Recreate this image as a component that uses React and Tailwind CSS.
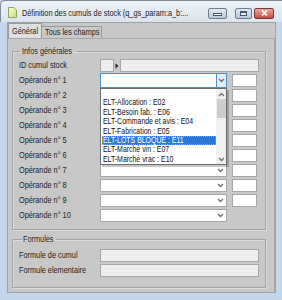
import React from "react";

const operandes = [
  "Opérande n° 1",
  "Opérande n° 2",
  "Opérande n° 3",
  "Opérande n° 4",
  "Opérande n° 5",
  "Opérande n° 6",
  "Opérande n° 7",
  "Opérande n° 8",
  "Opérande n° 9",
  "Opérande n° 10",
];

const listItems = [
  "",
  "ELT-Allocation : E02",
  "ELT-Besoin fab. : E06",
  "ELT-Commande et avis : E04",
  "ELT-Fabrication : E05",
  "ELT-LOTS BLOQUE : E11",
  "ELT-Marché vin : E07",
  "ELT-Marché vrac : E10",
];

// the dialog font is narrow, squeeze Liberation Sans to match
function T({ children, className = "" }) {
  return (
    <span className={`inline-block origin-left scale-x-[0.77] whitespace-nowrap ${className}`}>
      {children}
    </span>
  );
}

function Chevron({ up = false }) {
  return (
    <svg width="7" height="5" viewBox="0 0 7 5">
      <path
        d={up ? "M1 4l2.5-2.5L6 4" : "M1 1l2.5 2.5L6 1"}
        fill="none"
        stroke="#6f6f6f"
        strokeWidth="1.3"
      />
    </svg>
  );
}

function TitleBar() {
  return (
    <div className="h-[22px] flex items-center bg-gradient-to-b from-[#eef2f7] to-[#dbe3ec] border-t border-l border-[#7f8a96] rounded-tl-[5px]">
      <svg width="9" height="11" viewBox="0 0 9 11" className="ml-[7px] mt-[2px] shrink-0">
        <defs>
          <linearGradient id="pg" x1="0" y1="0" x2="1" y2="1">
            <stop offset="0" stopColor="#fbfde8" />
            <stop offset="1" stopColor="#c5de74" />
          </linearGradient>
        </defs>
        <path d="M0.5 0.5h5.5l2.5 2.5v7.5h-8z" fill="url(#pg)" stroke="#8fa55a" />
      </svg>
      <div className="ml-[5px] mt-[3px] flex-1 min-w-0 text-[9.5px] text-[#1b1b1b]">
        <T>Définition des cumuls de stock (q_gs_param:a_b:...</T>
      </div>
      <div className="mt-[3px] flex items-center shrink-0">
        <div className="w-[19px] h-[11px] rounded-[2px] border border-[#6e7c8e] bg-gradient-to-b from-[#e4eaf2] to-[#b9c7d8] flex items-end justify-center pb-[2px]">
          <div className="w-[7px] h-[1px] bg-white border border-[#4a5668] box-content" />
        </div>
        <div className="ml-[8px] w-[17px] h-[11px] rounded-[2px] border border-[#6e7c8e] bg-gradient-to-b from-[#e4eaf2] to-[#b9c7d8] flex items-center justify-center">
          <div className="w-[7px] h-[5px] border border-[#4a5668] border-t-2 bg-white/60" />
        </div>
        <div className="ml-[2px] mr-[8px] w-[20px] h-[11px] rounded-[2px] border border-[#7a3a35] bg-gradient-to-b from-[#e9a99f] to-[#c54b3f] flex items-center justify-center">
          <svg width="7" height="6" viewBox="0 0 7 6">
            <path d="M1 0.5l5 5M6 0.5l-5 5" stroke="#ffffff" strokeWidth="1.6" />
          </svg>
        </div>
      </div>
    </div>
  );
}

function DropList() {
  return (
    <div className="absolute left-[-1px] top-[14px] w-[127px] h-[77px] bg-white border border-[#6d6d6d] shadow-[2px_2px_0_rgba(0,0,0,0.22)] flex z-10">
      <div className="flex-1 flex flex-col pl-[1px] overflow-hidden">
        {listItems.map((item, i) => (
          <div
            key={i}
            className={`h-[9.4px] leading-[9.4px] text-[9px] pl-[1px] ${
              i === 5
                ? "bg-[#2b78d6] text-white outline outline-1 outline-dotted outline-[#c79a6a] -outline-offset-1"
                : "text-[#111]"
            }`}
          >
            <T>{item}</T>
          </div>
        ))}
      </div>
      <div className="w-[10px] bg-[#f0f0f0] flex flex-col items-center">
        <div className="h-[10px] flex items-center">
          <Chevron up />
        </div>
        <div className="w-[9px] h-[19px] bg-[#cdcdcd]" />
        <div className="flex-1" />
        <div className="h-[10px] flex items-center">
          <Chevron />
        </div>
      </div>
    </div>
  );
}

function Combo({ focused = false, children }) {
  return (
    <div
      className={`relative bg-white border flex items-center justify-end w-[127px] ${
        focused ? "border-[#4b90c8] h-[15px]" : "border-[#a6a6a6] h-[13px]"
      }`}
    >
      {focused ? (
        <div className="w-[10px] h-full bg-[#e3effa] border-l border-[#4b90c8] flex items-center justify-center">
          <Chevron />
        </div>
      ) : (
        <div className="w-[10px] flex items-center justify-center mr-[1px]">
          <Chevron />
        </div>
      )}
      {children}
    </div>
  );
}

function SmallBox() {
  return <div className="ml-[5px] w-[25px] h-[13px] bg-white border border-[#a6a6a6]" />;
}

function Row({ label, children }) {
  return (
    <div className="h-[15px] flex items-center">
      <div className="w-[81px] text-[9.5px] text-[#222] pb-[1px]">
        <T>{label}</T>
      </div>
      {children}
    </div>
  );
}

export default function App() {
  return (
    <div className="w-[282px] h-[300px] overflow-hidden bg-[#c3d6ea] flex flex-col font-['Liberation_Sans',Arial,sans-serif]">
      <TitleBar />
      <div className="flex-1 flex flex-col ml-[7px] mr-[6px] mb-[7px] bg-[#c8c8c8] border border-[#9aa3ad]">
        <div className="h-[15px] flex items-end">
          <div className="w-[34px] h-[15px] pl-[3px] bg-[#dedede] border border-b-0 border-[#9a9a9a] text-[9.5px] text-[#1e1e1e] flex items-center">
            <T>Général</T>
          </div>
          <div className="w-[60px] h-[12px] pl-[3px] bg-[#c8c8c8] border border-l-0 border-b-0 border-[#9a9a9a] text-[9.5px] text-[#1e1e1e] flex items-center">
            <T>Tous les champs</T>
          </div>
        </div>
        <div className="flex-1 border-t border-r border-[#a8a8a8] pl-[4px] pr-[8px] pt-[7px]">
          <fieldset className="border border-[#a3a3a3] shadow-[inset_1px_1px_0_#dadada,1px_1px_0_#dadada] pl-[6px] pt-[2px] pb-[6px]">
            <legend className="ml-[1px] w-[57px] pl-[2px] text-[9.5px] text-[#222] leading-[10px]">
              <T>Infos générales</T>
            </legend>
            <Row label="ID cumul stock">
              <div className="w-[14px] h-[13px] bg-[#eeeeee] border border-[#a6a6a6]" />
              <svg width="4" height="6" viewBox="0 0 4 6" className="mx-[1px]">
                <path d="M0.5 0.5l3 2.5-3 2.5z" fill="#222" />
              </svg>
              <div className="w-[139px] h-[13px] bg-[#eeeeee] border border-[#a6a6a6]" />
            </Row>
            {operandes.map((label, i) => (
              <Row key={label} label={label}>
                <Combo focused={i === 0}>{i === 0 && <DropList />}</Combo>
                {i < 9 && <SmallBox />}
              </Row>
            ))}
          </fieldset>
          <fieldset className="mt-[4px] border border-[#a3a3a3] shadow-[inset_1px_1px_0_#dadada,1px_1px_0_#dadada] pl-[6px] pt-[4px] pb-[9px]">
            <legend className="ml-[3px] w-[34px] pl-[1px] text-[9.5px] text-[#222] leading-[10px]">
              <T>Formules</T>
            </legend>
            <Row label="Formule de cumul">
              <div className="w-[159px] h-[13px] bg-[#eeeeee] border border-[#a6a6a6]" />
            </Row>
            <Row label="Formule elementaire">
              <div className="w-[159px] h-[13px] bg-[#eeeeee] border border-[#a6a6a6]" />
            </Row>
          </fieldset>
        </div>
      </div>
    </div>
  );
}
